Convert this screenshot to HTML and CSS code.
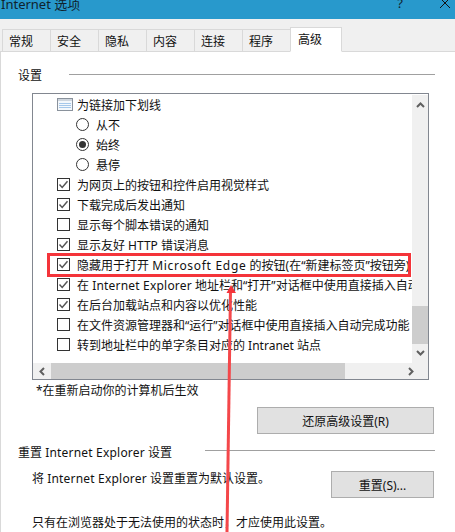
FILE: index.html
```html
<!DOCTYPE html>
<html lang="zh-CN">
<head>
    <meta charset="UTF-8">
    <title>Internet 选项</title>
    <link rel="stylesheet" href="styles.css">
</head>
<body>
    <svg class="defs" width="0" height="0">
        <symbol id="tick" viewBox="0 0 13 13">
            <path d="M2.5 6.5 L5.2 9.4 L10.5 3.2" fill="none" stroke="#555" stroke-width="1.5"/>
        </symbol>
    </svg>

    <div class="dialog">
        <div class="titlebar">
            <span class="title">Internet 选项</span>
            <span class="title-help">?</span>
            <svg class="title-close" width="10" height="10" viewBox="0 0 10 10">
                <path d="M0 0 L10 10 M10 0 L0 10" stroke="#111" stroke-width="1"/>
            </svg>
        </div>

        <div class="tabs">
            <div class="tab">常规</div>
            <div class="tab">安全</div>
            <div class="tab">隐私</div>
            <div class="tab">内容</div>
            <div class="tab">连接</div>
            <div class="tab">程序</div>
            <div class="tab active">高级</div>
        </div>

        <div class="panel">
            <div class="group-head settings-head">
                <span class="label">设置</span>
                <span class="group-line"></span>
            </div>

            <div class="listbox">
                <div class="list-main">
                    <div class="rows">
                        <div class="row">
                            <svg class="row-icon" width="16" height="13" viewBox="0 0 16 13">
                                <rect x="0.5" y="0.5" width="15" height="12" fill="#f4f8fc" stroke="#8a929c"/>
                                <rect x="1" y="1" width="14" height="2" fill="#cfd6de"/>
                                <path d="M2 5.5 H14 M2 7.5 H14 M2 9.5 H14" stroke="#a6c8ea"/>
                            </svg>
                            <span class="label">为链接加下划线</span>
                        </div>
                        <div class="row sub"><span class="radio"></span><span class="label">从不</span></div>
                        <div class="row sub"><span class="radio on"></span><span class="label">始终</span></div>
                        <div class="row sub"><span class="radio"></span><span class="label">悬停</span></div>
                        <div class="row"><span class="check"><svg width="13" height="13"><use href="#tick"/></svg></span><span class="label">为网页上的按钮和控件启用视觉样式</span></div>
                        <div class="row"><span class="check"><svg width="13" height="13"><use href="#tick"/></svg></span><span class="label">下载完成后发出通知</span></div>
                        <div class="row"><span class="check"></span><span class="label">显示每个脚本错误的通知</span></div>
                        <div class="row"><span class="check"><svg width="13" height="13"><use href="#tick"/></svg></span><span class="label">显示友好 HTTP 错误消息</span></div>
                        <div class="row"><span class="check"><svg width="13" height="13"><use href="#tick"/></svg></span><span class="label">隐藏用于打开 <span class="wide">Microsoft Edge</span> 的按钮(在“新建标签页”按钮旁)</span></div>
                        <div class="row"><span class="check"><svg width="13" height="13"><use href="#tick"/></svg></span><span class="label">在 <span class="lat">Internet Explorer</span> 地址栏和“打开”对话框中使用直接插入自动完成功能</span></div>
                        <div class="row"><span class="check"><svg width="13" height="13"><use href="#tick"/></svg></span><span class="label">在后台加载站点和内容以优化性能</span></div>
                        <div class="row"><span class="check"></span><span class="label">在文件资源管理器和“运行”对话框中使用直接插入自动完成功能</span></div>
                        <div class="row"><span class="check"></span><span class="label">转到地址栏中的单字条目对应的 Intranet 站点</span></div>
                    </div>
                    <div class="vscroll">
                        <svg width="9" height="6" viewBox="0 0 9 6"><path d="M1 5 L4.5 1.5 L8 5" fill="none" stroke="#606060" stroke-width="2"/></svg>
                        <div class="vthumb"></div>
                        <svg width="9" height="6" viewBox="0 0 9 6"><path d="M1 1 L4.5 4.5 L8 1" fill="none" stroke="#606060" stroke-width="2"/></svg>
                    </div>
                </div>
                <div class="hscroll">
                    <div class="harrow">
                        <svg width="6" height="9" viewBox="0 0 6 9"><path d="M5 1 L1.5 4.5 L5 8" fill="none" stroke="#606060" stroke-width="2"/></svg>
                    </div>
                    <div class="hthumb"></div>
                    <div class="harrow right">
                        <svg width="6" height="9" viewBox="0 0 6 9"><path d="M1 1 L4.5 4.5 L1 8" fill="none" stroke="#606060" stroke-width="2"/></svg>
                    </div>
                </div>
            </div>

            <div class="note">*在重新启动你的计算机后生效</div>

            <div class="btn-row">
                <button class="btn restore-btn">还原高级设置(R)</button>
            </div>

            <div class="group-head reset-head">
                <span class="label">重置 <span class="lat">Internet Explorer</span> 设置</span>
                <span class="group-line"></span>
            </div>

            <div class="reset-row">
                <span class="reset-text">将 <span class="lat">Internet Explorer</span> 设置重置为默认设置。</span>
                <button class="btn reset-btn">重置(S)...</button>
            </div>

            <div class="warn">只有在浏览器处于无法使用的状态时，才应使用此设置。</div>
        </div>

        <!-- annotation drawn on top of the screenshot -->
        <div class="red-box"></div>
        <svg class="red-arrow" width="24" height="248" viewBox="0 0 24 248">
            <path d="M10.5 6 L7 248" stroke="#f4474a" stroke-width="3" fill="none"/>
            <path d="M11 1 L16 9 L6.5 9 Z" fill="#f4343a"/>
        </svg>
    </div>
</body>
</html>
```

FILE: styles.css
```css
body {
    margin: 0;
    background-color: white;
    font-family: "Noto Sans", "Noto Sans CJK SC", sans-serif;
    font-size: 12px;
    color: #111;
}
.defs {
    position: absolute;
}
.lat {
    letter-spacing: 0.2px;
}
.wide {
    letter-spacing: 0.7px;
}
.label {
    padding-top: 2px;
}
.dialog {
    position: relative;
    width: 455px;
    height: 532px;
    overflow: hidden;
    display: flex;
    flex-direction: column;
}
.titlebar {
    height: 19px;
    flex: none;
    background-color: #2899cc;
    display: flex;
    align-items: center;
    overflow: hidden;
    color: #10222c;
}
.title {
    font-size: 13px;
    line-height: 18px;
    margin-top: -11px;
    margin-left: 1px;
    flex: 1;
}
.title-help {
    font-size: 13px;
    line-height: 18px;
    margin-top: -14px;
    margin-right: 37px;
}
.title-close {
    margin-top: -13px;
    margin-right: 5px;
}
.tabs {
    height: 33px;
    flex: none;
    box-sizing: border-box;
    background-color: #f0f0f0;
    border-bottom: 1px solid #d9d9d9;
    padding-left: 2px;
    display: flex;
    align-items: flex-end;
}
.tab {
    box-sizing: border-box;
    width: 48px;
    height: 23px;
    margin-bottom: -1px;
    padding-left: 6px;
    line-height: 23px;
    background-color: #f0f0f0;
    border: 1px solid #d9d9d9;
    border-right-width: 0;
}
.tab.active {
    width: 52px;
    height: 25px;
    padding-left: 7px;
    background-color: white;
    border-right-width: 1px;
    border-bottom-color: white;
}
.panel {
    flex: 1;
    border-left: 1px solid #d9d9d9;
    padding-left: 17px;
    padding-right: 20px;
}
.group-head {
    display: flex;
    align-items: center;
    height: 20px;
}
.settings-head {
    margin-top: 12px;
}
.settings-head .group-line {
    margin-left: 27px;
}
.group-line {
    flex: 1;
    height: 1px;
    background-color: #a0a0a0;
}
.reset-head {
    margin-top: 7px;
}
.reset-head .group-line {
    margin-left: 33px;
    margin-top: -2px;
}
.listbox {
    box-sizing: border-box;
    width: 397px;
    height: 287px;
    margin-top: 9px;
    margin-left: 14px;
    border: 1px solid #828790;
    display: flex;
    flex-direction: column;
}
.list-main {
    flex: 1;
    display: flex;
    min-height: 0;
}
.rows {
    flex: 1;
    min-width: 0;
    overflow: hidden;
}
.row {
    height: 20px;
    display: flex;
    align-items: center;
    padding-left: 24px;
    white-space: nowrap;
}
.row.sub {
    padding-left: 43px;
}
.check {
    box-sizing: border-box;
    flex: none;
    width: 13px;
    height: 13px;
    margin-right: 7px;
    border: 1px solid #333;
    display: flex;
    align-items: center;
    justify-content: center;
}
.check svg {
    flex: none;
}
.row-icon {
    flex: none;
    margin-right: 4px;
}
.radio {
    box-sizing: border-box;
    flex: none;
    width: 13px;
    height: 13px;
    margin-right: 7px;
    border: 1px solid #333;
    border-radius: 50%;
    display: flex;
    align-items: center;
    justify-content: center;
}
.radio.on::after {
    content: "";
    width: 7px;
    height: 7px;
    border-radius: 50%;
    background-color: #333;
}
.vscroll {
    width: 16px;
    flex: none;
    margin-top: 1px;
    background-color: #f0f0f0;
    display: flex;
    flex-direction: column;
    align-items: center;
    padding-top: 7px;
}
.vthumb {
    align-self: stretch;
    height: 38px;
    margin-top: 198px;
    background-color: #cdcdcd;
}
.vscroll svg:last-child {
    margin-top: 6px;
}
.hscroll {
    height: 16px;
    flex: none;
    background-color: #f0f0f0;
    display: flex;
}
.harrow {
    width: 18px;
    flex: none;
    display: flex;
    align-items: center;
    justify-content: center;
}
.harrow.right {
    margin-left: auto;
    width: 26px;
    padding-right: 8px;
    box-sizing: border-box;
}
.hthumb {
    width: 294px;
    background-color: #cdcdcd;
}
.note {
    height: 20px;
    line-height: 20px;
    margin-top: 1px;
    margin-left: 18px;
}
.btn-row {
    display: flex;
    justify-content: flex-end;
    margin-top: 6px;
}
.btn {
    box-sizing: border-box;
    height: 27px;
    padding: 0;
    margin-right: 1px;
    background-color: #e1e1e1;
    border: 1px solid #adadad;
    font-family: inherit;
    font-size: 12px;
    color: #111;
}
.restore-btn {
    width: 177px;
}
.reset-btn {
    width: 103px;
}
.reset-row {
    display: flex;
    justify-content: space-between;
    margin-left: 14px;
    margin-top: 10px;
    line-height: 20px;
}
.reset-text {
    margin-top: -2px;
}
.warn {
    margin-left: 14px;
    margin-top: 15px;
    line-height: 20px;
    white-space: nowrap;
}
.red-box {
    position: absolute;
    left: 47px;
    top: 253px;
    width: 364px;
    height: 24px;
    box-sizing: border-box;
    border: 3px solid #f4343a;
}
.red-arrow {
    position: absolute;
    left: 220px;
    top: 284px;
}
```
